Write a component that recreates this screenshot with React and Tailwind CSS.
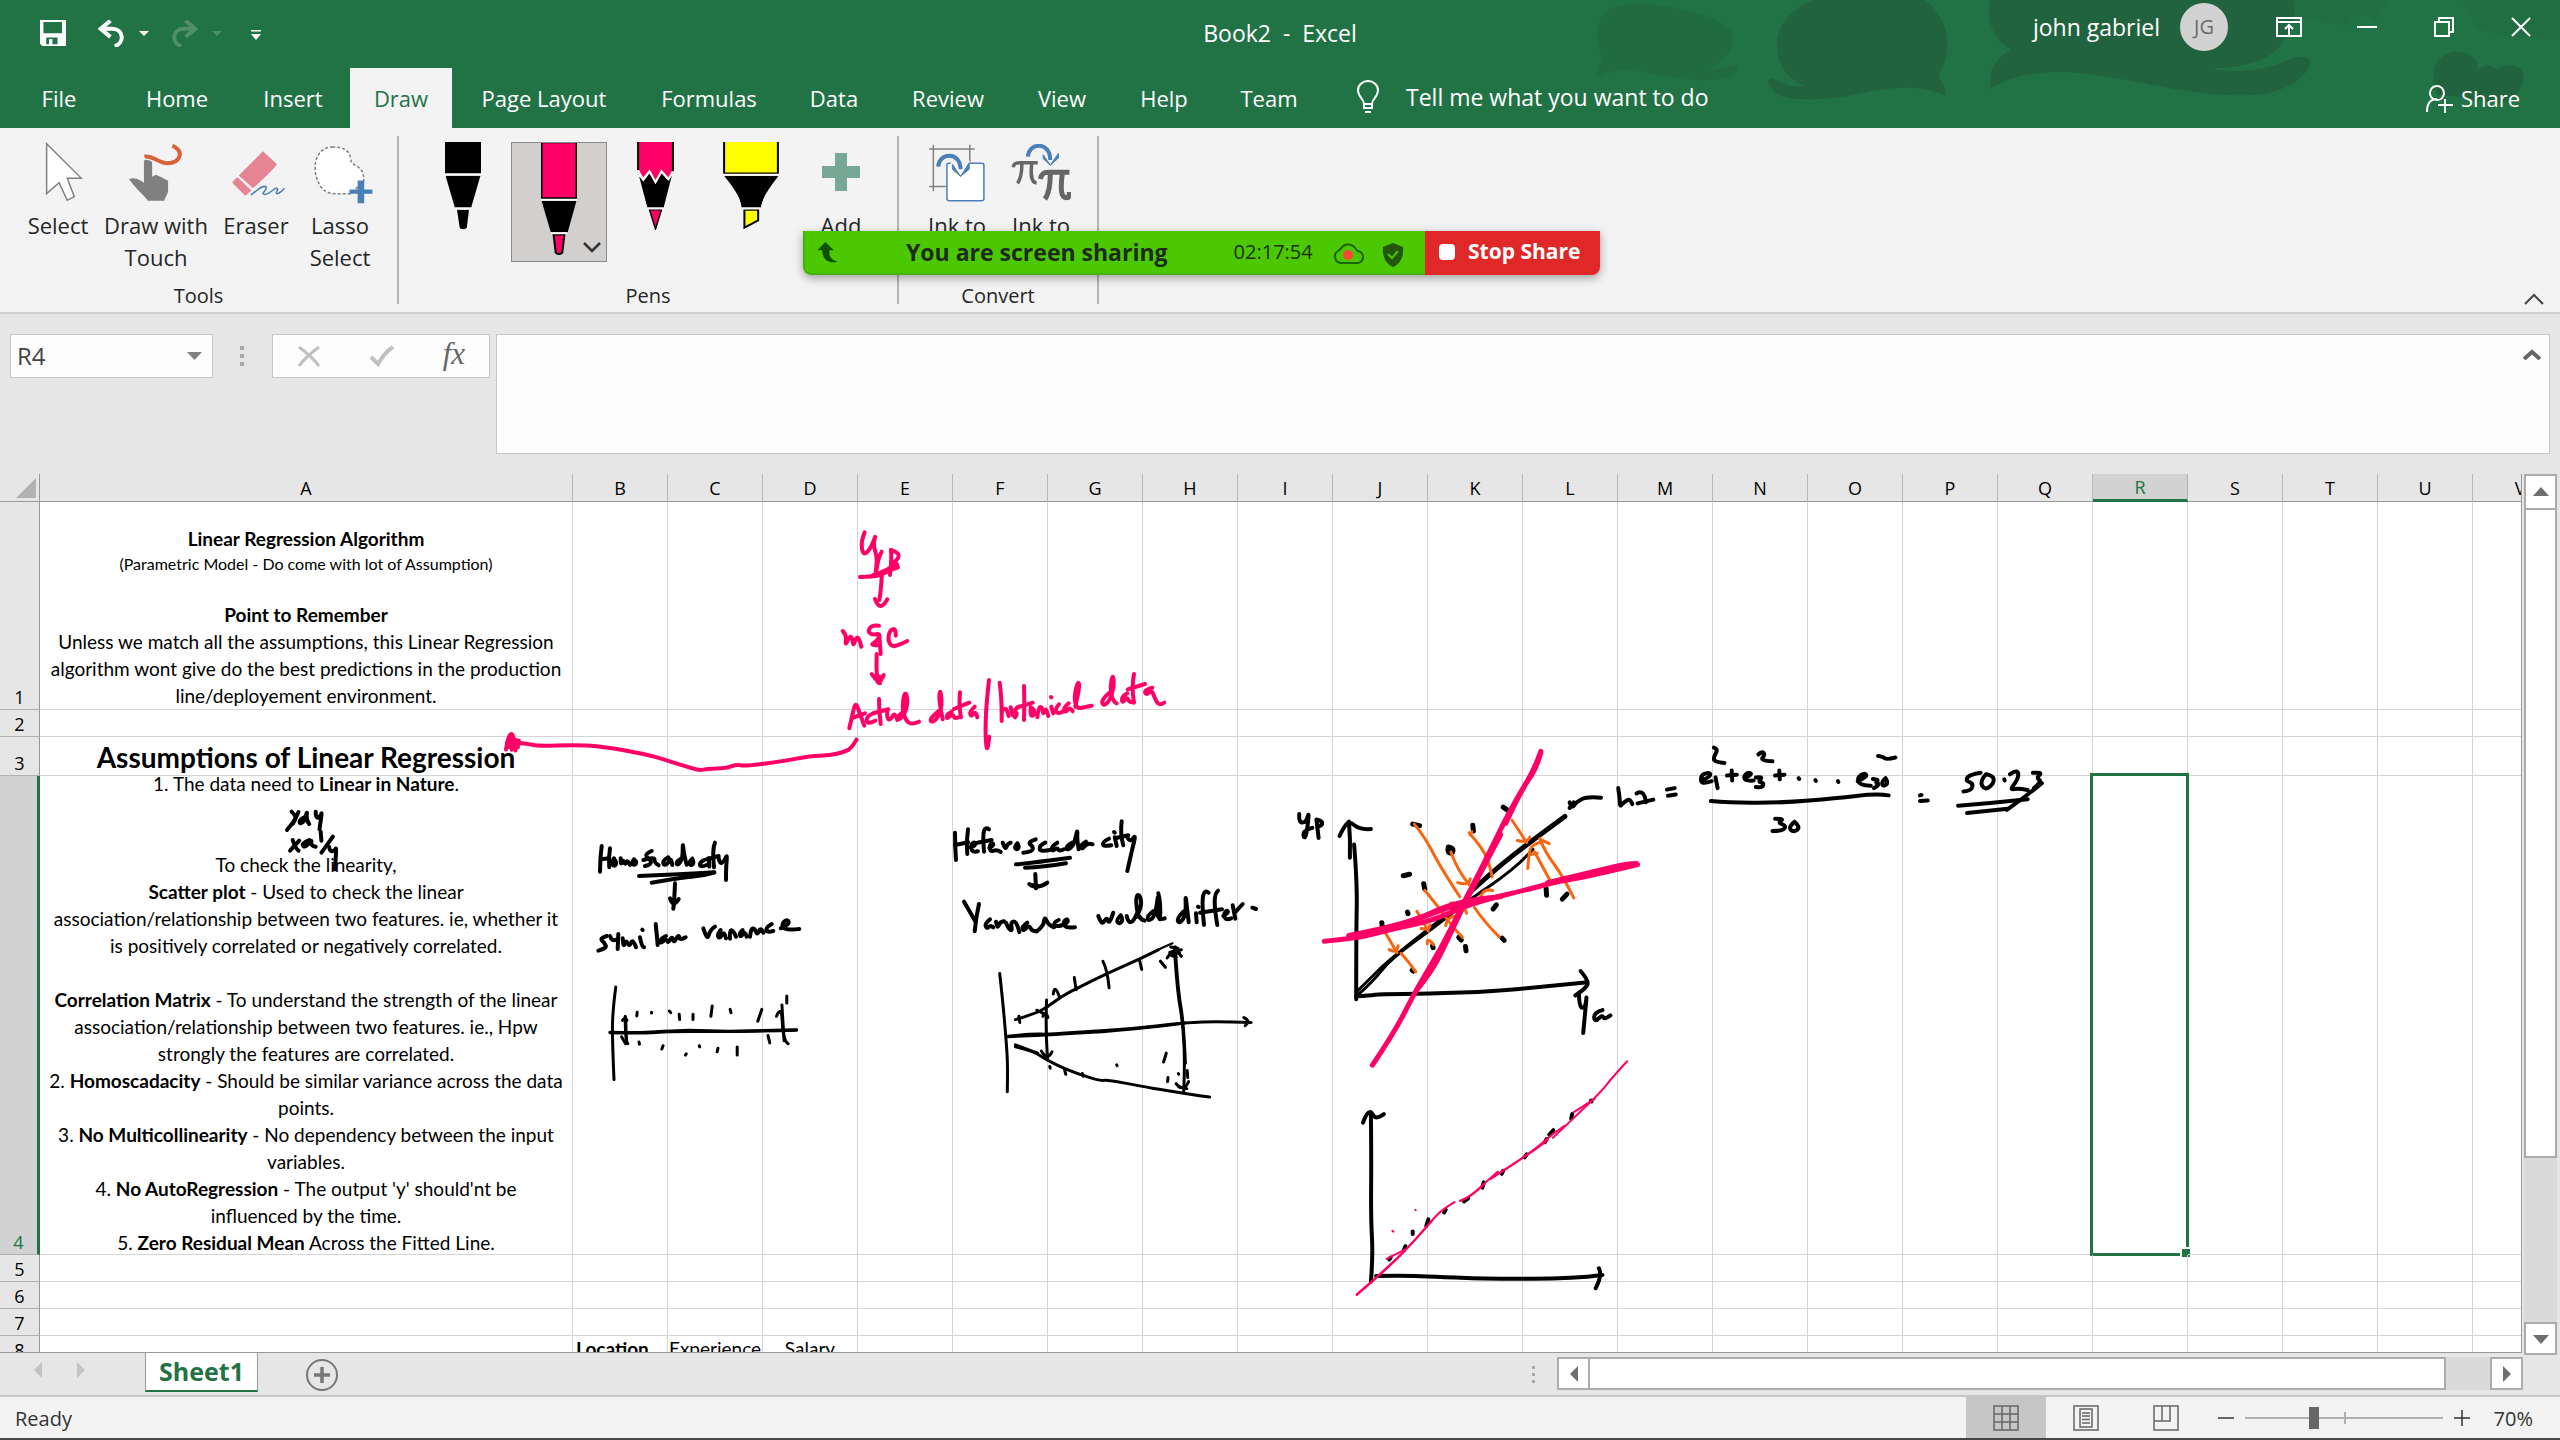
import React from "react";

const TABS = [
  ["File", "w-[118px]"],
  ["Home", "w-[118px]"],
  ["Insert", "w-[114px]"],
  ["Draw", "w-[102px]"],
  ["Page Layout", "w-[184px]"],
  ["Formulas", "w-[146px]"],
  ["Data", "w-[104px]"],
  ["Review", "w-[124px]"],
  ["View", "w-[104px]"],
  ["Help", "w-[100px]"],
  ["Team", "w-[110px]"],
];

const COLUMNS = "ABCDEFGHIJKLMNOPQRSTUV".split("");

const BLACK = "#000000";
const PINK = "#ff0066";
const ORANGE = "#f96611";

/* Freehand ink. Each layer has an origin on the page, a scale for its points, a pen and its strokes. */
const INK = [
  {
    name: "Proportional to y, proportional to 1/y",
    x: 0, y: 470, sx: 1 / 2.6133, sy: 1 / 3, color: BLACK, width: 4,
    strokes: [
      "762,1025 775,1040 768,1055 750,1080", "780,1026 766,1060",
      "800,1040 783,1048 783,1062 795,1055 803,1020 800,1050 808,1062",
      "825,1025 825,1045 838,1040 842,1022 835,1078",
      "765,1110 772,1135 780,1142", "782,1112 758,1142",
      "808,1110 790,1118 792,1132 805,1125 815,1108 812,1128 825,1130",
      "838,1085 840,1112", "870,1100 840,1148",
      "860,1130 862,1145 875,1142 880,1130 875,1198",
    ],
  },
  {
    name: "Homoscadacity, similar variance",
    x: 590, y: 830, sx: 1 / 3, sy: 1 / 3, color: BLACK, width: 4,
    strokes: [
      "35,48 30,85 30,125", "60,55 55,85 58,112", "33,88 58,85",
      "72,85 64,98 72,110 82,98 72,86", "92,85 92,107 99,88 106,106 112,88 120,105",
      "132,88 124,98 133,107 142,96 132,88", "185,63 168,70 170,82 184,92 180,105 165,108",
      "160,90 195,80 192,98 206,106", "235,82 218,92 222,108 238,96 243,84 247,105",
      "275,85 258,95 262,107 278,88 278,34 282,75 290,104", "307,86 295,96 303,108 313,98 307,86",
      "342,90 326,100 334,112 350,105", "356,85 358,110", "375,38 366,58 372,112", "350,88 386,78",
      "386,84 389,102 402,95 412,72 408,110 408,150",
      "147,138 240,135 373,127", "185,158 270,143 340,138 373,128",
      "255,160 253,215 250,236", "240,205 250,235 266,207", "243,210 262,212",
      "50,318 28,325 45,340 50,355 25,362", "60,318 65,336 82,328", "85,312 83,357",
      "98,325 100,354 108,328 118,352 128,325 138,352", "150,322 155,350 162,352", "157,299 158,300",
      "197,282 200,310 203,345", "228,318 212,325 210,342 228,325 234,340 246,318 252,340 266,312 270,332 287,322",
      "340,295 352,332 360,300 375,290", "392,300 380,315 390,326 402,302 408,325",
      "420,326 418,302 430,300 438,320", "458,300 447,310 453,322 465,302 470,320",
      "480,320 483,294 495,297 502,316 512,290 520,308", "545,282 528,292 530,308 550,303",
      "572,295 598,284 594,268 576,278 580,302 628,297",
    ],
  },
  {
    name: "Heteroscadacity, variance would differ",
    x: 940, y: 810, sx: 1 / 3, sy: 1 / 3, color: BLACK, width: 4,
    strokes: [
      "45,68 45,110 48,150", "84,58 78,95 82,132", "45,105 85,97",
      "92,112 108,106 104,95 92,105 96,128 114,124", "147,58 136,50 128,75 132,125", "112,98 155,90",
      "148,114 162,106 157,98 148,108 152,126 170,118 182,126", "188,98 196,120 202,102 212,98",
      "232,100 222,112 232,120 238,108 232,100", "287,88 262,96 280,110 276,125 250,128",
      "316,98 298,106 300,126 330,120", "352,98 335,108 336,125 352,112 358,125 372,118",
      "396,98 378,108 382,122 402,105 413,54 411,90 416,118", "438,95 420,105 426,119 442,98 458,103",
      "507,86 488,95 490,110 514,106", "524,82 530,108", "522,66 524,68",
      "545,34 540,70 550,106", "528,84 565,76", "562,82 570,98 588,72 576,120 562,183",
      "228,163 250,162 390,143", "255,173 310,172 378,160",
      "286,192 288,235", "268,222 288,240 322,218", "275,225 295,228",
      "72,275 105,332", "117,282 108,320 104,364",
      "150,328 134,340 140,357 152,345 160,352", "168,335 172,357 180,335 192,334",
      "198,338 205,355 217,364 212,335 230,334 238,366", "262,338 245,350 250,364 268,345 276,364 290,364",
      "290,364 310,350 314,318 325,345 342,352", "356,330 341,336 346,352 368,345",
      "370,345 386,336 380,325 368,340 380,355 405,352",
      "475,318 485,347 500,320 508,345 520,308", "542,316 528,330 538,343 550,330 542,316",
      "560,318 565,340 582,332 590,312", "590,320 606,290 600,254 588,256 590,300 600,328 614,332",
      "640,303 620,318 626,334 645,318 655,250 650,290 654,332 674,325", "655,250 663,280 660,328",
      "730,305 710,325 718,342 738,315 736,250 742,300 746,337", "768,310 770,337", "774,290 776,291",
      "806,248 794,238 785,275 792,345", "834,242 824,250 824,300 832,345", "780,308 846,298",
      "850,318 866,308 860,300 850,315 858,331 874,325", "878,286 886,326", "884,308 908,282", "937,293 948,297",
    ],
  },
  {
    name: "Variance bands",
    x: 560, y: 500, sx: 1 / 2.24, sy: 1 / 2.45, color: BLACK, width: 3,
    strokes: [
      "125,1193 118,1250 117,1320 121,1420", "112,1304 180,1306 250,1300 300,1299 370,1302 440,1300 530,1298",
      "112,1305 180,1307 250,1302 370,1303 530,1299",
      "146,1265 146,1325 152,1332", "138,1315 147,1332", "140,1275 146,1265 150,1275", "147,1268 149,1330",
      "173,1255 172,1264", "205,1255 205,1257", "245,1252 248,1256", "267,1260 268,1273", "298,1260 298,1273",
      "341,1240 338,1265", "381,1248 383,1256", "452,1248 443,1277", "485,1265 496,1235 500,1325 511,1332",
      "497,1237 502,1325", "508,1215 508,1232", "177,1328 178,1333", "231,1337 228,1345", "312,1337 313,1340",
      "283,1357 281,1360", "354,1343 352,1352", "397,1340 397,1360", "466,1312 470,1330",
      "985,1160 992,1230 1000,1330 1003,1390 1002,1450",
      "1003,1314 1050,1308 1105,1309 1160,1303 1280,1296 1400,1280 1480,1278 1548,1280", "1532,1268 1548,1276 1535,1288",
      "1003,1315 1105,1310 1280,1298 1400,1281",
      "1020,1273 1060,1260 1090,1244 1125,1215 1160,1195 1225,1160 1300,1124 1340,1102", "1028,1265 1030,1280",
      "1090,1225 1087,1290 1092,1370", "1068,1250 1090,1262", "1078,1350 1092,1375 1102,1352", "1082,1265 1088,1248 1093,1268",
      "1105,1210 1108,1185 1118,1215", "1152,1170 1156,1200", "1216,1130 1226,1150 1230,1195", "1298,1127 1303,1150",
      "1345,1130 1356,1145", "1376,1095 1382,1200 1395,1280 1400,1380 1397,1450", "1378,1095 1384,1200 1397,1280 1401,1380",
      "1360,1122 1376,1092 1392,1118", "1366,1108 1392,1102", "1368,1095 1384,1098", "1366,1112 1388,1110", "1370,1116 1380,1120",
      "1380,1430 1397,1452 1408,1425", "1386,1438 1404,1442",
      "1358,1355 1352,1377", "1362,1415 1361,1425", "1385,1405 1386,1407", "1405,1398 1406,1415",
      "1020,1340 1060,1350 1090,1372 1140,1398 1210,1424 1225,1420 1300,1436 1360,1447 1455,1463",
      "1020,1335 1070,1355", "1097,1388 1098,1392", "1130,1395 1133,1407", "1170,1405 1172,1412", "1247,1384 1248,1386",
    ],
  },
  {
    name: "Thin guide",
    x: 560, y: 500, sx: 1 / 2.24, sy: 1 / 2.45, color: BLACK, width: 2,
    strokes: ["1320,1113 1345,1098 1372,1086"],
  },
  {
    name: "Plot of predicted against actual with error formula",
    x: 1260, y: 720, sx: 1 / 1.9122, sy: 1 / 2.6133, color: BLACK, width: 4,
    strokes: [
      "75,246 74,268 88,268 94,238 90,290 86,310 82,300 86,288 100,282", "108,262 112,308", "108,260 120,264 118,277 110,278",
      "170,265 173,310 172,360", "152,303 162,275 172,265 190,287 212,285", "180,325 186,430 184,560 184,730",
      "184,722 210,720 230,716 320,716 450,709 540,697 622,686", "613,656 628,680 625,700 603,720",
      "610,712 610,752 622,752 625,715 622,760 618,818", "655,758 638,765 640,790 655,770 658,784 670,772",
      "592,215 596,232 605,214 625,200 652,203", "600,215 592,230",
      "685,178 688,205 688,228 696,214 708,205 712,220", "720,192 735,180 738,215", "722,218 752,208", "778,182 793,178", "780,198 795,195",
      "845,158 862,148 860,137 845,142 842,160 850,166 864,160", "871,150 875,178", "893,145 912,143", "902,132 903,158",
      "927,152 942,142 934,136 925,146 928,160 944,158", "948,150 962,148 952,162 964,164 960,178 948,175", "985,145 1003,143", "993,132 994,155",
      "1030,152 1031,154", "1062,157 1063,159", "1105,160 1106,162",
      "1143,160 1162,148 1156,138 1142,150 1146,170 1168,172", "1172,154 1184,156 1176,163 1186,168 1174,178", "1196,152 1188,162 1192,174 1202,164 1196,152",
      "868,72 876,76 868,95 868,110 888,112", "953,90 960,82 966,90 956,106 980,108", "1182,94 1192,96 1198,104 1215,98",
      "862,212 900,217 1000,216 1100,205 1180,192 1202,197",
      "985,258 1003,258 990,268 1006,276 1000,290 980,290", "1022,266 1010,280 1020,294 1034,280 1022,266",
      "1262,197 1265,196", "1262,212 1277,210",
      "1378,138 1358,142 1348,158 1364,165 1360,185 1345,187", "1388,142 1376,160 1386,184 1404,165 1402,145 1388,142", "1423,155 1424,158",
      "1434,142 1450,128 1450,155 1433,183 1450,178 1468,183", "1478,138 1497,136 1484,152 1496,160 1480,178", "1495,165 1460,205 1428,235",
      "1335,224 1400,217 1468,207", "1352,243 1430,232",
      "212,1025 213,1150 212,1300 216,1400 212,1468", "197,1052 203,1030 212,1022 222,1045 237,1030",
      "222,1453 290,1452 350,1456 440,1460 600,1460 655,1450", "648,1433 655,1450 642,1485",
    ],
  },
  {
    name: "Second pass of the first fit",
    x: 1260, y: 720, sx: 1 / 1.9122, sy: 1 / 2.6133, color: BLACK, width: 3,
    strokes: [
      "187,707 215,670 240,635 320,548 400,462", "189,716 215,685 250,625 330,545 410,460 460,415 500,370 522,338",
    ],
  },
  {
    name: "Data points and first fit",
    x: 1260, y: 720, sx: 1 / 1.9122, sy: 1 / 2.6133, color: BLACK, width: 5,
    strokes: [
      "400,452 450,390 520,315 583,252",
      "292,272 305,276", "407,275 408,290", "360,332 358,345 368,350 370,335 360,332", "274,407 286,403", "313,428 315,442",
      "282,502 283,506", "233,530 234,542", "330,590 331,595", "380,568 385,575", "393,592 394,603", "463,570 467,576",
      "452,483 446,494", "547,440 548,458", "587,455 578,468", "465,228 474,236", "291,654 293,656",
    ],
  },
  {
    name: "Points near the fitted line",
    x: 1260, y: 720, sx: 1 / 1.9122, sy: 1 / 2.6133, color: BLACK, width: 4,
    strokes: [
      "250,1405 247,1410", "278,1375 275,1385", "292,1337 292,1343", "322,1305 318,1322", "355,1280 352,1287",
      "398,1250 390,1258", "428,1208 425,1222", "465,1178 462,1186", "510,1135 506,1143", "548,1095 545,1103",
      "561,1072 553,1084", "597,1030 595,1042", "633,995 634,997",
    ],
  },
  {
    name: "Residuals",
    x: 1260, y: 720, sx: 1 / 1.9122, sy: 1 / 2.6133, color: ORANGE, width: 3,
    strokes: [
      "295,272 315,305 345,385 382,462", "400,295 420,325 438,370 444,410", "405,292 402,300", "365,345 378,395 400,430",
      "378,425 400,434 402,415", "482,262 510,320", "492,315 512,322 516,306", "512,388 514,350 520,325 540,318",
      "555,420 525,345", "600,465 578,405 545,345 535,310", "515,352 530,348", "536,312 553,323",
      "315,445 345,495 370,545 387,568", "355,537 358,512 377,512", "410,490 430,530 457,566", "422,460 430,438 445,446",
      "300,500 322,552", "308,545 325,550 325,535", "320,585 318,565 332,587", "238,552 262,608", "247,600 262,612 264,590",
      "270,610 285,632 298,658", "365,478 392,480 395,505",
    ],
  },
  {
    name: "Alternative fits",
    x: 1260, y: 720, sx: 1 / 1.9122, sy: 1 / 2.6133, color: PINK, width: 5,
    strokes: [
      "215,902 260,810 300,700 345,600 385,490 430,370 480,230 525,130 537,82", "300,705 330,655 360,570 400,455 460,300",
      "470,270 500,180 528,130 537,85", "123,578 190,570 250,547 330,525 400,480 520,440 560,425 640,405 722,378",
      "170,563 280,535 380,470 460,462", "250,547 330,505 400,470", "550,425 650,392 705,375 720,375", "170,565 195,566",
    ],
  },
  {
    name: "Fitted line",
    x: 1260, y: 720, sx: 1 / 1.9122, sy: 1 / 2.6133, color: PINK, width: 2,
    strokes: [
      "185,1502 210,1472 280,1385 330,1305 350,1278 372,1260", "382,1257 400,1248 430,1210 455,1180", "440,1200 520,1130 560,1080 583,1060",
      "560,1092 600,1040 650,975 675,932 702,892", "242,1408 280,1382", "600,1025 640,990", "253,1335 255,1337", "297,1280 298,1281",
      "185,1502 195,1488 208,1474", "442,1198 520,1131 550,1098", "384,1256 402,1248 430,1212", "186,1501 215,1468 280,1386 330,1307",
    ],
  },
  {
    name: "Predicted y, m and c, actual data / historical data",
    x: 830, y: 520, sx: 1 / 3, sy: 1 / 3, color: PINK, width: 4,
    strokes: [
      "104,37 95,60 95,90 104,105 124,82 138,42 130,70 136,95 142,120 137,158", "155,95 144,112 138,160",
      "183,90 186,120 180,165", "183,90 206,98 206,114 190,130 183,126", "90,171 130,170 165,162 202,135", "130,165 170,155 204,142",
      "135,165 178,148 200,132", "155,170 153,215 148,240", "135,237 150,278 172,238",
      "38,333 50,345 45,378 58,350 66,350 70,380 78,352 88,354 94,380", "147,317 125,315 113,335 128,345 150,340 143,362 118,377 150,375",
      "148,345 152,402", "197,347 198,325 180,330 173,360 185,380 205,376 232,363",
      "140,402 138,440 142,485", "125,462 148,492 161,465", "130,468 158,472", "135,476 154,480", "145,488 150,490",
      "58,625 66,590 76,545 88,575 103,617", "66,594 105,580", "126,582 108,590 112,614 136,602", "147,537 147,575 152,612", "130,580 175,568",
      "172,573 170,592 180,602 195,575 202,600", "226,572 203,585 206,602 226,580 234,540 225,512 216,560 226,600 245,615 267,605",
      "327,572 305,590 300,606 318,603 337,560 331,505 326,540 338,598", "365,575 350,582 350,598 368,580 374,598 385,592",
      "390,517 386,560 393,592", "372,567 418,548", "434,560 418,575 424,591 438,572 442,592",
      "477,480 468,560 466,650 472,702 478,650", "509,488 516,540 515,603", "515,575 528,552 536,588", "542,562 548,586",
      "566,560 550,570 564,582 555,592", "582,498 584,550 582,600", "562,562 608,548", "602,562 600,586 612,588 614,568 602,562",
      "622,592 625,562 636,560 640,586 648,560 655,588", "663,531 664,532", "664,560 670,580", "687,553 675,568 682,583 698,575",
      "716,550 700,563 706,579 720,560 728,574", "736,560 750,500 744,482 732,530 740,566 760,562 785,557",
      "838,518 815,538 818,558 838,545 853,500 849,460 840,500 848,545 860,550", "892,520 875,530 877,550 892,530 898,548 908,546",
      "912,462 904,500 912,548", "893,508 945,492", "967,503 943,510 948,526 966,510 974,535 988,558 1003,548",
    ],
  },
  {
    name: "Connector",
    x: 560, y: 500, sx: 1 / 2.24, sy: 1 / 2.45, color: PINK, width: 4,
    strokes: [
      "664,587 655,605 640,616 605,626 560,627 500,640 415,652 395,648 372,657 330,658 313,663 280,652 240,638 190,622 90,603 30,600 -49,603 -76,596 -105,594",
      "-121,611 -117,580 -104,568 -100,614", "-115,585 -92,590", "-119,595 -92,598", "-119,605 -94,606", "-110,575 -108,612",
    ],
  },
];

function inkPath(layer, stroke) {
  const p = stroke.split(" ").map((s) => {
    const [x, y] = s.split(",").map(Number);
    return [layer.x + x * layer.sx, layer.y + y * layer.sy];
  });
  const f = (q) => `${q[0].toFixed(1)} ${q[1].toFixed(1)}`;
  if (p.length < 3) return `M${p.map(f).join("L")}`;
  let d = `M${f(p[0])}`;
  for (let i = 1; i < p.length - 1; i++) {
    const end = i === p.length - 2 ? p[i + 1] : [(p[i][0] + p[i + 1][0]) / 2, (p[i][1] + p[i + 1][1]) / 2];
    d += `Q${f(p[i])} ${f(end)}`;
  }
  return d;
}

function Ink() {
  return (
    <svg className="pointer-events-none absolute top-0 left-0 h-[878px] w-[2520px]" viewBox="0 474 2520 878" role="img" aria-label="Ink notes">
      {INK.map((layer) => (
        <g key={layer.name} fill="none" stroke={layer.color} strokeWidth={layer.width} strokeLinecap="round" strokeLinejoin="round">
          {layer.strokes.map((s, i) => (
            <path key={i} d={inkPath(layer, s)} />
          ))}
        </g>
      ))}
    </svg>
  );
}

function Icon({ box, className, children }) {
  return (
    <svg className={`block shrink-0 ${className}`} viewBox={box} preserveAspectRatio="none" fill="none" aria-hidden="true">
      {children}
    </svg>
  );
}

const NS = { vectorEffect: "non-scaling-stroke" };

function TitleBar() {
  return (
    <div className="relative grid h-[66px] grid-cols-[1fr_auto_1fr] items-center text-[23px]">
      <div className="flex items-center pl-10">
        <button aria-label="Save">
          <Icon box="75 62 46 77" className="h-[26px] w-[26px]">
            <path d="M75 62H121V139H79L75 132ZM81 68V101H114V68ZM86 114V134H91V118H97V134H106V114Z" fill="#fff" fillRule="evenodd" />
          </Icon>
        </button>
        <button aria-label="Undo" className="ml-8">
          <Icon box="178 58 50 80" className="h-[27px] w-[27px]">
            <path d="M201 60L183 84L201 108M184 84H204C226 84 228 125 209 136" stroke="#fff" strokeWidth="4" {...NS} />
          </Icon>
        </button>
        <button aria-label="Undo history" className="ml-3.5">
          <Icon box="0 0 10 6" className="h-[5px] w-[10px]"><path d="M0 0H10L5 6Z" fill="#fff" /></Icon>
        </button>
        <button aria-label="Redo" className="ml-[22px]" disabled>
          <Icon box="311 58 50 80" className="h-[27px] w-[27px]">
            <path d="M338 60L356 84L338 108M355 84H335C313 84 311 125 330 136" stroke="#4f9069" strokeWidth="4" {...NS} />
          </Icon>
        </button>
        <button aria-label="Redo history" className="ml-3.5" disabled>
          <Icon box="0 0 10 6" className="h-[5px] w-[10px]"><path d="M0 0H10L5 6Z" fill="#4f9069" /></Icon>
        </button>
        <button aria-label="Customize Quick Access Toolbar" className="ml-[29px]">
          <Icon box="0 0 10 10" className="mt-1 h-[10px] w-[10px]"><path d="M0 0H10V1.5H0ZM0 4H10L5 10Z" fill="#fff" /></Icon>
        </button>
      </div>
      <h1 className="whitespace-pre">Book2  -  Excel</h1>
      <div className="mb-3 flex items-center justify-end pr-[29px]">
        <span>john gabriel</span>
        <span className="ml-5 flex size-12 items-center justify-center rounded-full bg-[#d2d2d2] text-[20px] text-[#6b6b6b]">JG</span>
        <button aria-label="Ribbon Display Options" className="ml-12">
          <Icon box="0 0 26 20" className="h-5 w-[26px]">
            <path d="M1 1H25V19H1ZM1 5H25M13 19V8M9 12L13 8L17 12" stroke="#fff" strokeWidth="2" />
          </Icon>
        </button>
        <button aria-label="Minimize" className="ml-[55px]">
          <span className="block h-0.5 w-5 bg-white" />
        </button>
        <button aria-label="Restore Down" className="ml-[57px]">
          <Icon box="0 0 20 20" className="size-5">
            <path d="M1 5H15V19H1ZM5 5V1H19V15H15" stroke="#fff" strokeWidth="2" />
          </Icon>
        </button>
        <button aria-label="Close" className="ml-[57px]">
          <Icon box="0 0 20 20" className="size-5">
            <path d="M1 1L19 19M19 1L1 19" stroke="#fff" strokeWidth="2" />
          </Icon>
        </button>
      </div>
    </div>
  );
}

function Header() {
  return (
    <header className="relative flex h-32 shrink-0 flex-col justify-between overflow-hidden bg-[#217346] text-white">
      <svg className="absolute top-0 right-0 h-32 w-[963px]" viewBox="0 0 963 128" aria-hidden="true">
        <g transform="translate(103 0) scale(.5485 .3333)" fill="#22633f">
          <path d="M-150 18C-180 30 -193 80 -186 130C-182 160 -175 175 -178 183C-188 200 -190 225 -187 235C-170 210 -130 205 -90 220C-40 240 20 250 55 228C70 215 75 195 60 195C40 215 20 205 5 212C50 190 70 130 55 90C20 30 -100 0 -150 18Z" opacity=".5" />
          <path d="M205 0C150 40 135 100 142 160C145 200 160 235 190 258C160 262 145 245 130 235C118 240 125 262 145 285C170 305 230 300 280 285C340 262 400 250 448 288C448 260 440 245 435 225C460 160 458 60 410 0Z" />
          <path d="M530 0C520 60 535 120 568 150C540 170 525 210 530 266C570 220 640 205 720 225C830 250 900 290 1000 286C1070 280 1110 230 1112 185C1110 165 1090 168 1075 178C1040 205 990 225 930 205C1000 205 1050 170 1060 130C1085 80 1085 40 1082 0Z" />
          <path d="M1345 285C1330 230 1335 160 1380 155C1412 157 1420 190 1418 210C1430 190 1445 195 1452 210C1470 190 1500 190 1502 230C1500 270 1480 300 1460 310C1420 300 1390 290 1345 285Z" />
          <path d="M1080 0H1255C1240 25 1235 45 1232 70C1215 35 1190 40 1180 75C1150 70 1110 60 1082 40ZM1385 0H1568V120C1520 110 1440 120 1410 70C1408 40 1400 20 1385 0Z" opacity=".35" />
        </g>
      </svg>
      <TitleBar />
      <nav className="relative flex h-[60px] items-stretch text-[22px]" aria-label="Ribbon tabs">
        {TABS.map(([name, w]) => (
          <button
            key={name}
            className={`${w} shrink-0 ${name === "Draw" ? "bg-[#f3f3f3] text-[#217346]" : "text-white"}`}
          >
            {name}
          </button>
        ))}
        <button className="ml-8 flex items-center pb-0.5 text-[23px]">
          <Icon box="0 0 24 34" className="mr-[26px] h-[34px] w-6">
            <path d="M8 24C8 19 2 17 2 10A10 9 0 0 1 22 10C22 17 16 19 16 24ZM8 24V28H16V24M9 32H15" stroke="#fff" strokeWidth="2" />
          </Icon>
          Tell me what you want to do
        </button>
        <button className="mr-10 ml-auto flex items-center">
          <Icon box="0 0 28 30" className="mr-2 h-[30px] w-7">
            <path d="M2 29C2 19 7 16 12 16M12 17A7 7 0 1 1 18 13.500C17 16 14 17 12 17M20 16V30M13 22H28" stroke="#fff" strokeWidth="2" />
          </Icon>
          Share
        </button>
      </nav>
    </header>
  );
}

function Tool({ width, label, icon, aria }) {
  return (
    <button aria-label={aria} className={`${width} flex shrink-0 flex-col items-center leading-8`}>
      <span className="flex h-[73px] items-start justify-center">{icon}</span>
      {label}
    </button>
  );
}

function Group({ title, className, inner, children }) {
  return (
    <section aria-label={title} className={`h-[168px] border-r-2 border-[#b3b3b3] ${className}`}>
      <div className={`flex h-36 items-start ${inner}`}>{children}</div>
      <div className="text-center text-[20px] leading-8">{title}</div>
    </section>
  );
}

function Ribbon() {
  return (
    <div className="relative h-[186px] shrink-0 border-b-2 border-[#d2d0ce] bg-[#f3f3f3] pt-2 text-[22px] text-[#262626]">
      <div className="flex">
        <Group title="Tools" className="w-[399px]" inner="pl-[18px]">
          <Tool width="w-20" label="Select" icon={
            <Icon box="80 426 70 180" className="mt-1.5 ml-3 h-[60px] w-[38px]">
              <path d="M83 431L147 535H121L134 590L121 601L106 548L83 581Z" fill="#fff" stroke="#808080" strokeWidth="1.500" {...NS} />
            </Icon>} />
          <Tool width="w-[116px]" label={<>Draw with<br />Touch</>} icon={
            <Icon box="235 430 102 174" className="mt-2 h-[58px] w-14">
              <path d="M264 482C264 474 275 476 279 485V528L286 522L296 530L308 540V570C308 580 302 590 301 600H271C267 588 252 570 237 536C248 528 256 538 264 546Z" fill="#808080" />
              <path d="M265 468C280 462 288 488 308 488C328 486 340 455 316 435" stroke="#d9623b" strokeWidth="4" {...NS} />
            </Icon>} />
          <Tool width="w-[84px]" label="Eraser" icon={
            <Icon box="426 446 98 140" className="mt-3.5 ml-1 h-[47px] w-[54px]">
              <path d="M484 450L509 488C510 494 466 560 466 560L440 522ZM438 527L463 567L452 582L429 545C427 540 438 527 438 527Z" fill="#e68494" />
              <path d="M462 580C472 570 482 548 490 556C492 566 480 574 486 578C496 582 500 562 508 560C516 560 504 576 510 576C516 574 520 566 523 560" stroke="#4a7fb8" strokeWidth="1.500" {...NS} />
            </Icon>} />
          <Tool width="w-[84px]" label={<>Lasso<br />Select</>} icon={
            <Icon box="573 438 110 176" className="mt-2.5 ml-2 h-[58px] w-[60px]">
              <path d="M608 441C575 441 572 500 577 530C584 570 595 583 615 583H640L664 545C666 490 640 505 640 475C638 450 625 441 608 441Z" fill="#fff" stroke="#808080" strokeWidth="1.500" strokeDasharray="3 2" {...NS} />
              <path d="M653 543H665V570H680V583H665V612H653V583H638V570H653Z" fill="#4a7fb8" />
            </Icon>} />
        </Group>
        <Group title="Pens" className="w-[500px]" inner="pl-4">
          <button aria-label="Black pen" className="flex w-24 shrink-0 justify-center">
            <Icon box="811 426 66 265" className="mt-1.5 h-[88px] w-9">
              <path d="M811 426H877V521H811ZM812 528H876L859 623H829ZM833 630H855L851 684Q844 694 838 684Z" fill="#000" />
              <path d="M811 524H877M829 626H859" stroke="#fff" strokeWidth="2" {...NS} />
            </Icon>
          </button>
          <button aria-label="Pink pen" aria-pressed="true" className="mt-1.5 flex h-[120px] w-24 shrink-0 justify-center border border-[#8a8a8a] bg-[#d2d0ce]">
            <Icon box="986 426 66 338" className="h-[112px] w-9">
              <path d="M987 424H1051V593H987Z" fill="#ff0066" stroke="#000" strokeWidth="2" {...NS} />
              <path d="M987 600H1051L1035 695H1004Z" fill="#000" />
              <path d="M1009 702H1029L1025 757Q1019 765 1013 757Z" fill="#ff0066" stroke="#000" strokeWidth="2" {...NS} />
              <path d="M986 597H1052M1004 698H1034" stroke="#fff" strokeWidth="2" {...NS} />
            </Icon>
            <Icon box="0 0 18 11" className="mt-[99px] mr-[-24px] ml-1.5 h-[11px] w-[18px]"><path d="M1 1L9 9L17 1" stroke="#333" strokeWidth="2.500" /></Icon>
          </button>
          <button aria-label="Pink pencil" className="flex w-24 shrink-0 justify-center">
            <Icon box="1160 426 68 265" className="mt-1.5 h-[88px] w-[37px]">
              <path d="M1162 426H1226V515L1218 535L1205 512L1194 545L1183 512L1171 538L1162 505Z" fill="#ff0066" />
              <path d="M1162 426V510M1226 426V515" stroke="#000" strokeWidth="2" {...NS} />
              <path d="M1164 530L1172 545L1183 520L1194 552L1205 520L1216 540L1224 528L1209 623H1179Z" fill="#000" />
              <path d="M1183 630H1205L1194 688Z" fill="#ff0066" stroke="#000" strokeWidth="1.500" {...NS} />
              <path d="M1162 512L1171 538L1183 514L1194 547L1205 514L1218 538L1226 514M1179 626H1209" stroke="#fff" strokeWidth="2" {...NS} />
            </Icon>
          </button>
          <button aria-label="Yellow highlighter" className="flex w-24 shrink-0 justify-center">
            <Icon box="1318 426 102 265" className="mt-1.5 h-[88px] w-14">
              <path d="M1320 420H1418V521H1320Z" fill="#ffff00" stroke="#000" strokeWidth="2" {...NS} />
              <path d="M1320 528H1419C1405 560 1390 590 1387 623H1352C1350 590 1335 560 1320 528Z" fill="#000" />
              <path d="M1357 630H1382V662L1357 684Z" fill="#ffff00" stroke="#000" strokeWidth="2" {...NS} />
              <path d="M1318 524.500H1420M1352 626H1387" stroke="#fff" strokeWidth="2" {...NS} />
            </Icon>
          </button>
          <Tool width="w-[84px]" label="Add" aria="Add Pen" icon={
            <Icon box="0 0 38 38" className="mt-[17px] size-[38px]"><path d="M13 0H25V13H38V25H25V38H13V25H0V13H13Z" fill="#77a896" /></Icon>} />
        </Group>
        <Group title="Convert" className="w-[200px]" inner="pl-4">
          <Tool width="w-[84px]" label="Ink to" aria="Ink to Shape" icon={
            <Icon box="272 430 103 172" className="mt-2 h-[58px] w-14">
              <path d="M280 432V570M347 432V490M272 445H356M272 556H303" stroke="#808080" strokeWidth="1.500" {...NS} />
              <rect x="305" y="487" width="68" height="111" rx="5" fill="#fff" stroke="#4a7fb8" strokeWidth="1.500" {...NS} />
              <path d="M312 480H347V500H312Z" fill="#f3f3f3" />
              <path d="M289 497C290 455 330 450 330 505" stroke="#4a7fb8" strokeWidth="4" {...NS} />
              <path d="M315 490L330 526L346 486V505L330 526L315 505Z" fill="#4a7fb8" stroke="#4a7fb8" strokeWidth="1" {...NS} />
            </Icon>} />
          <Tool width="w-[84px]" label="Ink to" aria="Ink to Math" icon={
            <Icon box="420 430 110 174" className="mt-2 h-[58px] w-[60px]">
              <path d="M424 500C425 487 430 486 436 486H469M440 488C440 515 438 535 432 548M458 488C456 520 456 545 467 547" stroke="#666" strokeWidth="3.500" {...NS} />
              <path d="M474 535C476 516 482 515 488 515H527M492 518C492 550 490 580 482 595M514 518C511 560 510 598 525 590C527 585 527 578 527 574" stroke="#666" strokeWidth="5" {...NS} />
              <path d="M451 468C452 425 492 420 492 478" stroke="#4a7fb8" strokeWidth="4" {...NS} />
              <path d="M479 462L492 494L507 458V472L492 494L479 474Z" fill="#4a7fb8" stroke="#4a7fb8" strokeWidth="1" {...NS} />
            </Icon>} />
        </Group>
        <button aria-label="Collapse the Ribbon" className="mt-auto mr-4 mb-[-1px] ml-auto">
          <Icon box="0 0 20 12" className="h-3 w-5"><path d="M1 11L10 2L19 11" stroke="#444" strokeWidth="2" /></Icon>
        </button>
      </div>
      <ShareBar />
    </div>
  );
}

function ShareBar() {
  return (
    <div role="status" className="absolute top-[103px] left-[803px] flex h-11 rounded-b-lg shadow-[0_3px_10px_rgba(0,0,0,.35)]">
      <div className="flex w-[622px] items-center rounded-bl-lg border-b-2 border-l-2 border-[#41b300] bg-[#4bc800] pl-3 text-[#1f3010]">
        <Icon box="66 728 40 62" className="h-[21px] w-[21px]">
          <path d="M82 728L98 752H90C88 768 92 780 105 786C92 792 76 785 76 752H67Z" fill="#0e5200" />
        </Icon>
        <strong className="ml-[68px] text-[23px] text-[#1e2a1e]">You are screen sharing</strong>
        <span className="ml-[66px] text-[20px]">02:17:54</span>
        <Icon box="0 0 32 22" className="mt-1 ml-[19px] h-[22px] w-8">
          <path d="M9 20A6.500 6.500 0 0 1 6 8C9 7 10 1 16 1.500C22 1 24 7 26 8A6 6 0 0 1 24 20Z" stroke="#1c6400" strokeWidth="2" />
          <circle cx="16" cy="12" r="5" fill="#ff4538" />
        </Icon>
        <Icon box="0 0 22 24" className="mt-1.5 ml-[18px] h-6 w-[22px]">
          <path d="M11 0L21 4C22 14 18 21 11 24C4 21 0 14 1 4Z" fill="#21560c" />
          <path d="M6 11L10 15L16 8" stroke="#4bc800" strokeWidth="2" />
        </Icon>
      </div>
      <button className="flex w-[175px] items-center rounded-br-lg bg-[#e02828] pb-0.5 pl-3.5 text-[21px] font-bold whitespace-nowrap text-white">
        <span className="mr-[13px] size-4 rounded-sm bg-white" />
        Stop Share
      </button>
    </div>
  );
}

function FormulaBar() {
  return (
    <div className="flex h-40 shrink-0 items-start py-5 pr-2.5 pl-2.5">
      <div className="flex h-11 w-[203px] items-center border border-[#c6c6c6] bg-[#fdfdfd] pr-2.5">
        <input aria-label="Name Box" defaultValue="R4" className="w-full bg-transparent pl-1.5 text-[24px] text-[#444] outline-none" />
        <button aria-label="Name Box list"><Icon box="0 0 15 8" className="h-2 w-[15px]"><path d="M0 0H15L7.500 8Z" fill="#808080" /></Icon></button>
      </div>
      <div className="mt-3 ml-[27px] flex flex-col gap-1" aria-hidden="true">
        <span className="size-1 bg-[#a8a8a8]" /><span className="size-1 bg-[#a8a8a8]" /><span className="size-1 bg-[#a8a8a8]" />
      </div>
      <div className="ml-7 flex h-11 w-[218px] items-center justify-between border border-[#c6c6c6] bg-[#fdfdfd] pr-6 pl-6">
        <button aria-label="Cancel"><Icon box="0 0 24 22" className="h-[22px] w-6"><path d="M2 2C10 8 17 14 22 21M22 2C14 8 7 14 2 21" stroke="#c0c0c0" strokeWidth="3" /></Icon></button>
        <button aria-label="Enter"><Icon box="0 0 26 22" className="h-[22px] w-[26px]"><path d="M2 12L9 19C13 12 18 6 24 2" stroke="#c0c0c0" strokeWidth="4" /></Icon></button>
        <button aria-label="Insert Function" className="pb-1 font-['Liberation_Serif',serif] text-[31px] leading-8 text-[#666] italic">fx</button>
      </div>
      <div className="ml-[6px] flex h-[120px] flex-1 border border-[#c6c6c6] bg-[#fdfdfd]">
        <textarea aria-label="Formula Bar" className="h-full flex-1 resize-none bg-transparent p-2 outline-none" />
        <button aria-label="Collapse Formula Bar" className="mt-3.5 mr-2 self-start">
          <Icon box="0 0 18 11" className="h-[11px] w-[18px]"><path d="M1 10L9 3L17 10" stroke="#666" strokeWidth="4" /></Icon>
        </button>
      </div>
    </div>
  );
}

function Line({ children }) {
  return <div className="h-[27px] shrink-0 leading-[27px] whitespace-nowrap">{children}</div>;
}

function NotesTop() {
  return (
    <>
      <Line><b>Linear Regression Algorithm</b></Line>
      <div className="h-[23px] text-[16px] leading-[23px]">(Parametric Model - Do come with lot of Assumption)</div>
      <div className="h-[26px]" />
      <Line><b>Point to Remember</b></Line>
      <Line>Unless we match all the assumptions, this Linear Regression</Line>
      <Line>algorithm wont give do the best predictions in the production</Line>
      <Line>line/deployement environment.</Line>
    </>
  );
}

function NotesMain() {
  return (
    <div className="flex h-[478px] flex-col justify-center pb-1">
      <Line>1. The data need to <b>Linear in Nature</b>.</Line>
      <Line />
      <Line />
      <Line>To check the linearity,</Line>
      <Line><b>Scatter plot</b> - Used to check the linear</Line>
      <Line>association/relationship between two features. ie, whether it</Line>
      <Line>is positively correlated or negatively correlated.</Line>
      <Line />
      <Line><b>Correlation Matrix</b> - To understand the strength of the linear</Line>
      <Line>association/relationship between two features. ie., Hpw</Line>
      <Line>strongly the features are correlated.</Line>
      <Line>2. <b>Homoscadacity</b> - Should be similar variance across the data</Line>
      <Line>points.</Line>
      <Line>3. <b>No Multicollinearity</b> - No dependency between the input</Line>
      <Line>variables.</Line>
      <Line>4. <b>No AutoRegression</b> - The output 'y' should'nt be</Line>
      <Line>influenced by the time.</Line>
      <Line>5. <b>Zero Residual Mean</b> Across the Fitted Line.</Line>
    </div>
  );
}

const ROWS = [
  { n: 1, h: "h-[208px]", cells: { A: <NotesTop /> } },
  { n: 2, h: "h-[27px]", cells: {} },
  { n: 3, h: "h-[39px]", cells: { A: <div className="text-[28px] leading-[36px] font-bold">Assumptions of Linear Regression</div> } },
  { n: 4, h: "h-[479px]", cells: { A: <NotesMain /> } },
  { n: 5, h: "h-[27px]", cells: {} },
  { n: 6, h: "h-[27px]", cells: {} },
  { n: 7, h: "h-[27px]", cells: {} },
  {
    n: 8, h: "h-[27px]",
    cells: {
      B: <b className="block pl-[3px] text-left leading-[26px]">Location</b>,
      C: <span className="block leading-[26px]">Experience</span>,
      D: <span className="block leading-[26px]">Salary</span>,
    },
  },
];

function Grid() {
  return (
    <div className="relative min-w-0 flex-1 overflow-hidden border-r border-b border-[#999]">
      <table className="w-[2568px] table-fixed border-separate border-spacing-0">
        <colgroup>
          <col className="w-10" />
          <col className="w-[533px]" />
          {COLUMNS.slice(1).map((c) => <col key={c} className="w-[95px]" />)}
        </colgroup>
        <thead>
          <tr className="h-7 font-['Open_Sans',sans-serif] text-[18px]">
            <th aria-label="Select All" className="border-r border-b border-[#999] bg-[#e6e6e6] p-0">
              <Icon box="0 0 20 20" className="ml-4 size-5"><path d="M20 0V20H0Z" fill="#b2b2b2" /></Icon>
            </th>
            {COLUMNS.map((c) => (
              <th
                key={c}
                scope="col"
                className={`p-0 leading-[24px] font-normal ${c === "R" ? "border-r border-b-3 border-r-[#b0b0b0] border-b-[#217346] bg-[#d2d2d2] text-[#217346]" : "border-r border-b border-r-[#b8b8b8] border-b-[#999] bg-[#e6e6e6] text-black"}`}
              >
                {c}
              </th>
            ))}
          </tr>
        </thead>
        <tbody className="bg-white text-[19px] text-black">
          {ROWS.map((row) => (
            <tr key={row.n} className={row.h}>
              <th
                scope="row"
                className={`p-0 align-bottom font-['Open_Sans',sans-serif] text-[18px] leading-[24px] font-normal ${row.n === 4 ? "border-r-3 border-b border-r-[#217346] border-b-[#b0b0b0] bg-[#d2d2d2] text-[#217346]" : "border-r border-b border-r-[#999] border-b-[#b0b0b0] bg-[#e6e6e6] text-black"}`}
              >
                {row.n}
              </th>
              {COLUMNS.map((c) => (
                <td key={c} className="relative border-r border-b border-[#d4d4d4] p-0 text-center align-bottom">
                  {row.cells[c]}
                  {c === "R" && row.n === 4 && (
                    <div className="absolute -top-[3px] -right-[2px] -bottom-[2px] -left-[3px] border-3 border-[#217346]">
                      <div className="absolute -right-1 -bottom-1 size-[10px] border-t-2 border-l-2 border-white bg-[#217346]" />
                    </div>
                  )}
                </td>
              ))}
            </tr>
          ))}
        </tbody>
      </table>
      <Ink />
    </div>
  );
}

function Arrow({ dir }) {
  const d = { up: "M8 3L16 12H0Z", down: "M0 4H16L8 13Z", left: "M12 0V16L4 8Z", right: "M4 0V16L12 8Z" }[dir];
  return <Icon box="0 0 16 16" className="size-4"><path d={d} fill="#6e6e6e" /></Icon>;
}

function Sheet() {
  return (
    <main className="flex min-h-0 flex-1">
      <Grid />
      <div className="mr-[3px] -mb-0.5 ml-0.5 flex w-[33px] flex-col bg-[#dadada]" aria-label="Vertical scroll bar">
        <button aria-label="Scroll up" className="flex h-9 items-center justify-center border-2 border-[#ababab] bg-white"><Arrow dir="up" /></button>
        <div className="-mt-0.5 h-[650px] border-2 border-[#ababab] bg-white" />
        <button aria-label="Scroll down" className="mt-auto flex h-[33px] items-center justify-center border-2 border-[#ababab] bg-white"><Arrow dir="down" /></button>
      </div>
    </main>
  );
}

function SheetTabs() {
  return (
    <div className="flex h-11 shrink-0 border-b-2 border-[#c6c6c6]">
      <div className="flex w-[145px] items-center pb-2 pl-[34px]">
        <button aria-label="Previous sheet"><Icon box="0 0 8 16" className="h-4 w-2"><path d="M8 0V16L0 8Z" fill="#c3c3c3" /></Icon></button>
        <button aria-label="Next sheet" className="ml-[35px]"><Icon box="0 0 8 16" className="h-4 w-2"><path d="M0 0V16L8 8Z" fill="#c3c3c3" /></Icon></button>
      </div>
      <button className="-mt-px h-10 w-[113px] border-x border-b-2 border-x-[#999] border-b-[#217346] bg-white text-[25px] leading-[34px] font-bold text-[#217346]">Sheet1</button>
      <button aria-label="New sheet" className="mt-1.5 ml-12 flex size-8 items-center justify-center rounded-full border-2 border-[#777]">
        <Icon box="0 0 16 16" className="size-4"><path d="M8 0V16M0 8H16" stroke="#777" strokeWidth="3.500" /></Icon>
      </button>
      <div className="mt-[13px] ml-auto flex flex-col gap-1" aria-hidden="true">
        <span className="size-[3px] bg-[#a8a8a8]" /><span className="size-[3px] bg-[#a8a8a8]" /><span className="size-[3px] bg-[#a8a8a8]" />
      </div>
      <div className="mt-1 mr-[37px] ml-[22px] flex h-[33px] w-[966px] justify-between bg-[#dadada]" aria-label="Horizontal scroll bar">
        <button aria-label="Scroll left" className="flex w-[33px] items-center justify-center border-2 border-[#ababab] bg-white"><Arrow dir="left" /></button>
        <div className="mr-11 -ml-0.5 flex-1 border-2 border-[#ababab] bg-white" />
        <button aria-label="Scroll right" className="flex w-[33px] items-center justify-center border-2 border-[#ababab] bg-white"><Arrow dir="right" /></button>
      </div>
    </div>
  );
}

function StatusBar() {
  return (
    <footer className="flex h-[43px] shrink-0 items-stretch border-b-2 border-[#484644] bg-[#f3f3f3] text-[20px] text-[#333]">
      <span className="flex items-center pt-0.5 pl-[15px]">Ready</span>
      <div className="mr-[27px] ml-auto flex items-center">
        <button aria-label="Normal" aria-pressed="true" className="flex h-full w-20 items-center justify-center bg-[#c6c6c6]">
          <Icon box="0 0 26 26" className="size-[26px]"><path d="M1 1H25V25H1ZM1 9H25M1 17H25M9 1V25M17 1V25" stroke="#666" strokeWidth="1.500" /></Icon>
        </button>
        <button aria-label="Page Layout" className="flex w-20 justify-center">
          <Icon box="0 0 26 26" className="size-[26px]"><path d="M1 1H25V25H1ZM7 4H19V22H7ZM9 8H17M9 11H17M9 14.500H17M9 18H17" stroke="#666" strokeWidth="1.500" /></Icon>
        </button>
        <button aria-label="Page Break Preview" className="flex w-20 justify-center">
          <Icon box="0 0 26 26" className="size-[26px]"><path d="M1 1H25V25H1ZM1 16H17V1M9 1V16" stroke="#666" strokeWidth="1.500" /></Icon>
        </button>
        <button aria-label="Zoom Out" className="ml-3"><Icon box="0 0 16 16" className="size-4"><path d="M0 8H16" stroke="#333" strokeWidth="1.500" /></Icon></button>
        <div className="relative mx-[11px] flex w-[198px] items-center">
          <span className="absolute left-1/2 h-3 w-0.5 bg-[#b0b0b0]" />
          <input
            type="range" min="0" max="100" defaultValue="34" aria-label="Zoom"
            className="relative w-full appearance-none bg-transparent [&::-webkit-slider-runnable-track]:h-0.5 [&::-webkit-slider-runnable-track]:bg-[#b0b0b0] [&::-webkit-slider-thumb]:-mt-2.5 [&::-webkit-slider-thumb]:h-[22px] [&::-webkit-slider-thumb]:w-2.5 [&::-webkit-slider-thumb]:appearance-none [&::-webkit-slider-thumb]:bg-[#666]"
          />
        </div>
        <button aria-label="Zoom In"><Icon box="0 0 16 16" className="size-4"><path d="M0 8H16M8 0V16" stroke="#333" strokeWidth="1.500" /></Icon></button>
        <button className="ml-6 pt-0.5">70%</button>
      </div>
    </footer>
  );
}

export default function App() {
  return (
    <div className="flex h-screen flex-col overflow-hidden bg-[#e6e6e6] font-['Open_Sans','Noto_Sans',sans-serif]">
      <Header />
      <Ribbon />
      <FormulaBar />
      <div className="flex min-h-0 flex-1 flex-col font-['Lato',sans-serif]">
        <Sheet />
      </div>
      <div className="font-['Open_Sans',sans-serif]">
        <SheetTabs />
        <StatusBar />
      </div>
    </div>
  );
}
